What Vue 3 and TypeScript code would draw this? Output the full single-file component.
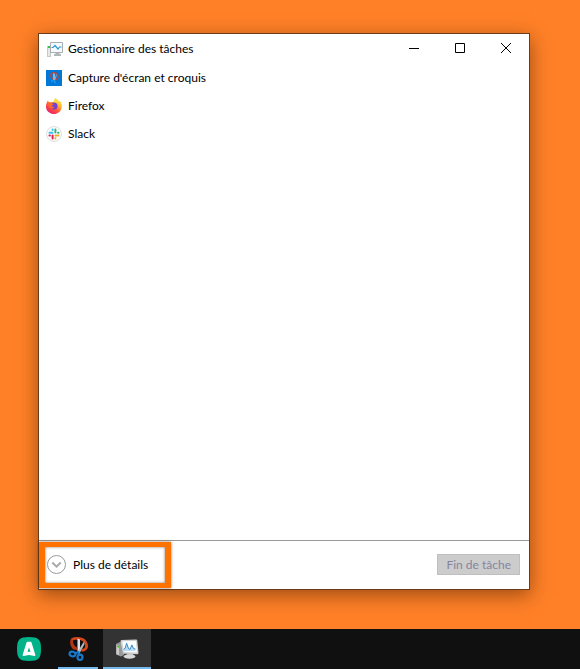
<script setup lang="ts">
import { ref } from 'vue'

interface Task {
  id: 'snip' | 'firefox' | 'slack'
  name: string
}

const tasks: Task[] = [
  { id: 'snip', name: "Capture d'écran et croquis" },
  { id: 'firefox', name: 'Firefox' },
  { id: 'slack', name: 'Slack' },
]

const hasSelection = ref(false)
</script>

<template>
  <div class="screen">
    <main class="desktop">
      <section class="window">
        <header class="titlebar">
          <svg class="icon" viewBox="0 0 16 16" aria-hidden="true">
            <path d="M0 5h4v11H0z" fill="#c4c8c6" />
            <path d="M1 7h2v8H1z" fill="#e6e8e7" />
            <path d="M1 5h2v2H1z" fill="#35c23c" />
            <path d="M9 12h3l1 1h1v2H7v-2h1z" fill="#b3b6b8" />
            <path d="M3.500 1.500h12v10h-12z" fill="#f4fbff" stroke="#a7adb1" />
            <path d="M4.500 6.500h1.500l2-2 3 3.500 1.500-2h2" fill="none" stroke="#3198d4" stroke-width="1.200" />
          </svg>
          <h1 class="title">Gestionnaire des tâches</h1>
          <div class="controls">
            <button class="control" type="button" aria-label="Réduire">
              <svg viewBox="0 0 12 12"><path d="M1 6.500h10" /></svg>
            </button>
            <button class="control" type="button" aria-label="Agrandir">
              <svg viewBox="0 0 12 12"><path d="M1.500 1.500h9v9h-9z" /></svg>
            </button>
            <button class="control" type="button" aria-label="Fermer">
              <svg viewBox="0 0 12 12"><path d="M1 1l10 10M11 1L1 11" /></svg>
            </button>
          </div>
        </header>

        <ul class="tasks">
          <li v-for="task in tasks" :key="task.id" class="task">
            <svg v-if="task.id === 'snip'" class="icon" viewBox="0 0 16 16" aria-hidden="true">
              <path d="M0 0h16v16H0z" fill="#0078d7" />
              <path d="M7 9C4.500 8 4 3.500 6.500 3 9.500 2 12 4 12 6.500 12 8.500 11 9.500 9 9.800" fill="none" stroke="#b5473f" stroke-width="1.500" />
              <path d="M7.300 3l1.400.7v7l-1.400-1z" fill="#c3d0da" />
              <path d="M10.500 4.500L8.800 10" stroke="#8fa9c0" />
              <path d="M5 10.500l2.500-.5v1.500l-2 .8zM8.500 10.500l1.200 1v2l-1.500-.5z" fill="#1d9bf0" />
            </svg>

            <svg v-else-if="task.id === 'firefox'" class="icon" viewBox="0 0 16 16" aria-hidden="true">
              <defs>
                <linearGradient id="fox-body" x1="0.850" y1="0.050" x2="0.200" y2="0.950">
                  <stop offset="0" stop-color="#fff44f" />
                  <stop offset="0.350" stop-color="#ffb02e" />
                  <stop offset="0.600" stop-color="#ff5b36" />
                  <stop offset="1" stop-color="#e81c70" />
                </linearGradient>
              </defs>
              <path d="M1.800 2.500L3 4.200 5 4l3-.5L9 0.200c2.500.8 3.500 2.500 4 3.500l.2-1.200c2 1.500 2.900 3.500 2.700 6.200C15.500 13 12 16 8 16s-8-3-8-7.300C0 6 1 4 1.800 2.500z" fill="url(#fox-body)" />
              <circle cx="8" cy="8" r="3.500" fill="#7540cf" />
              <path d="M2 5.500C3.500 4 5 4.500 6 5.500l1.700.4c0 1-1.700 1-1.900 1.800.3 1.300 2 1 2.700.7-.3 1.400-1.500 2.200-3 2C3.500 9.800 2.500 8.500 2 7z" fill="#ff6a2b" />
              <path d="M9 0.200c2.500 1 3.500 3 3.500 4.800C11 4 9.500 4.200 7.500 4.200z" fill="#ffdc3e" />
            </svg>

            <svg v-else class="icon" viewBox="0 0 16 16" aria-hidden="true">
              <circle cx="8" cy="8" r="7.500" fill="#fafafa" stroke="#dfdfdf" />
              <g fill="none" stroke-width="2" stroke-linecap="round">
                <path d="M3.500 6.700h3M6.600 3.500v.4" stroke="#36c5f0" />
                <path d="M9.400 3.500v3M12.100 6.700h.4" stroke="#2eb67d" />
                <path d="M9.500 9.400h3M9.400 12.100v.4" stroke="#ecb22e" />
                <path d="M6.600 9.500v3M3.500 9.400h.4" stroke="#e01e5a" />
              </g>
            </svg>
            <span>{{ task.name }}</span>
          </li>
        </ul>

        <footer class="footer">
          <div class="highlight">
            <button class="details" type="button">
              <svg class="chevron" viewBox="0 0 19 19" aria-hidden="true">
                <circle cx="9.500" cy="9.500" r="9" />
                <path class="arrow" d="M5.300 7.500l4.200 4.200 4.200-4.200" />
              </svg>
              <span>Plus de détails</span>
            </button>
          </div>
          <button class="end-task" type="button" :disabled="!hasSelection">Fin de tâche</button>
        </footer>
      </section>
    </main>

    <nav class="taskbar">
      <button class="app" type="button" aria-label="Aircall">
        <svg viewBox="0 0 24 24">
          <path d="M12 0c9.500 0 12 2.500 12 12s-2.500 12-12 12S0 21.500 0 12 2.500 0 12 0z" fill="#00b388" />
          <path d="M9.400 5.800q.3-1 1.300-1h2.600q1 0 1.300 1L18.300 17.800q.4 1.300-.9 1.200l-2.600-.6q-2.800-.6-5.600 0l-2.600.6q-1.300.1-.9-1.200zM12 10.500l-1.500 4.300q1.500-.3 3 0z" fill="#fff" fill-rule="evenodd" />
        </svg>
      </button>
      <button class="app running" type="button" aria-label="Capture d'écran et croquis">
        <svg viewBox="0 0 24 24">
          <path d="M5 1.500Q9-.5 14 .3C19 1 22 5 22 9c0 3.500-2.500 5.500-6.500 5.800V12c2.800-.2 4-1.500 3.600-4C18.500 4.500 15.500 2.800 11 2.800 8.500 2.800 7 3.200 6.500 4z" fill="#d5451a" />
          <path d="M5 1.500C3.200 5 4.500 10 7.500 12.500L11 13v-2.500C8.500 9.500 6.800 6.500 7 3.200z" fill="#b23611" />
          <path d="M11.500 1.500l2.500 1V16l-2.500-2z" fill="#dfe3e6" />
          <path d="M18.300 4v3.500L13.500 16.500l-2.500-1z" fill="#b3bbc0" />
          <ellipse cx="6.500" cy="17" rx="3" ry="2.300" fill="none" stroke="#1979c9" stroke-width="2.200" transform="rotate(15 6.500 17)" />
          <ellipse cx="14" cy="20.300" rx="2.500" ry="2.600" fill="none" stroke="#1979c9" stroke-width="2.200" />
          <path d="M9 16.300l3.500-1.300 1 3" fill="none" stroke="#1979c9" stroke-width="2" />
        </svg>
      </button>
      <button class="app running active" type="button" aria-label="Gestionnaire des tâches">
        <svg viewBox="0 0 24 24">
          <path d="M1 7l4-2 4 1v12l-3 1.500-5-2z" fill="#999" />
          <path d="M1.500 8L4 9v9l-2.500-1z" fill="#ccc" />
          <path d="M2 8.500l2 .8v1.500l-2-.8z" fill="#49c51e" />
          <path d="M12 16.500h6l.5 2.500h-7z" fill="#aaa" />
          <ellipse cx="14.500" cy="19.500" rx="6" ry="2.200" fill="#d8d8d8" />
          <path d="M6.500 3L21 2.500q1.300 0 1.300 1.300L23.500 16q0 1-1 1.200L9 16.800q-1-.1-1.200-1L5.500 4.500q-.2-1.300 1-1.500z" fill="#cfcfcf" />
          <path d="M7.200 4.300L21 3.900 22 15.500l-13-.4z" fill="#fafdff" />
          <path d="M9 14.300l-.4-2 1.500-1 1.500-5 2 5.500 1.500.6 1.800-4.500 1.500 3.500 2 .7.200 1.700z" fill="#b9dcf4" />
          <path d="M8.600 12.300l1.500-1 1.500-5 2 5.500 1.500.6 1.800-4.500 1.500 3.500 2 .7" fill="none" stroke="#348dc6" />
        </svg>
      </button>
    </nav>
  </div>
</template>

<style>
body {
  margin: 0;
}
</style>

<style scoped>
.screen {
  display: flex;
  flex-direction: column;
  min-height: 100vh;
  background: #ff8027;
  color: #000;
  font: 12px/16px Lato, "Open Sans", sans-serif;
  font-variant-ligatures: none;
}

.screen * {
  box-sizing: border-box;
}

button {
  margin: 0;
  padding: 0;
  border: 0;
  background: none;
  color: inherit;
  font: inherit;
  font-variant-ligatures: none;
}

.desktop {
  display: flex;
  flex: 1;
  padding: 33px 50px 39px 38px;
}

.window {
  display: flex;
  flex: 1;
  flex-direction: column;
  border: 1px solid #6b3b1b;
  background: #fff;
  box-shadow: 0 5px 18px rgba(60, 25, 0, 0.5);
}

.titlebar {
  display: flex;
  align-items: center;
  height: 30px;
  padding-left: 8px;
}

.icon {
  flex: none;
  width: 16px;
  height: 16px;
}

.title {
  flex: 1;
  margin: 0 0 0 5px;
  font-size: 12px;
  font-weight: 400;
}

.controls {
  display: flex;
  align-self: flex-start;
}

.control {
  display: grid;
  place-items: center;
  width: 46px;
  height: 28px;
}

.control svg {
  width: 12px;
  height: 12px;
  fill: none;
  stroke: #000;
}

.tasks {
  flex: 1;
  margin: 0;
  padding: 0;
  list-style: none;
}

.task {
  display: flex;
  align-items: center;
  gap: 6px;
  height: 28px;
  padding-left: 7px;
}

.footer {
  display: flex;
  align-items: center;
  justify-content: space-between;
  height: 49px;
  padding: 0 9px 1px 0;
  border-top: 1px solid #9b9b9b;
}

.highlight {
  align-self: flex-end;
  border: solid #ff7200;
  border-width: 5px 6px;
  box-shadow: 0 0 3px rgba(70, 35, 0, 0.6), inset 0 0 3px rgba(70, 35, 0, 0.6);
}

.details {
  display: flex;
  align-items: center;
  gap: 7px;
  height: 36px;
  padding: 0 17px 1px 2px;
}

.chevron {
  width: 19px;
  height: 19px;
  fill: none;
  stroke: #999;
}

.arrow {
  stroke-width: 2;
  stroke: #aaa;
}

.end-task {
  height: 21px;
  padding: 0 8px;
  border: 1px solid #bfbfbf;
  background: #ccc;
  color: #8385a0;
  line-height: 19px;
}

.taskbar {
  display: flex;
  gap: 1px;
  height: 40px;
  padding-left: 5px;
  background: #101010;
}

.app {
  display: grid;
  place-items: center;
  width: 48px;
  height: 40px;
}

.app svg {
  width: 24px;
  height: 24px;
}

.running {
  background: linear-gradient(#76b9ed, #76b9ed) center bottom / 40px 2px no-repeat;
}

.active {
  background-color: #333;
  background-size: 48px 2px;
}
</style>
